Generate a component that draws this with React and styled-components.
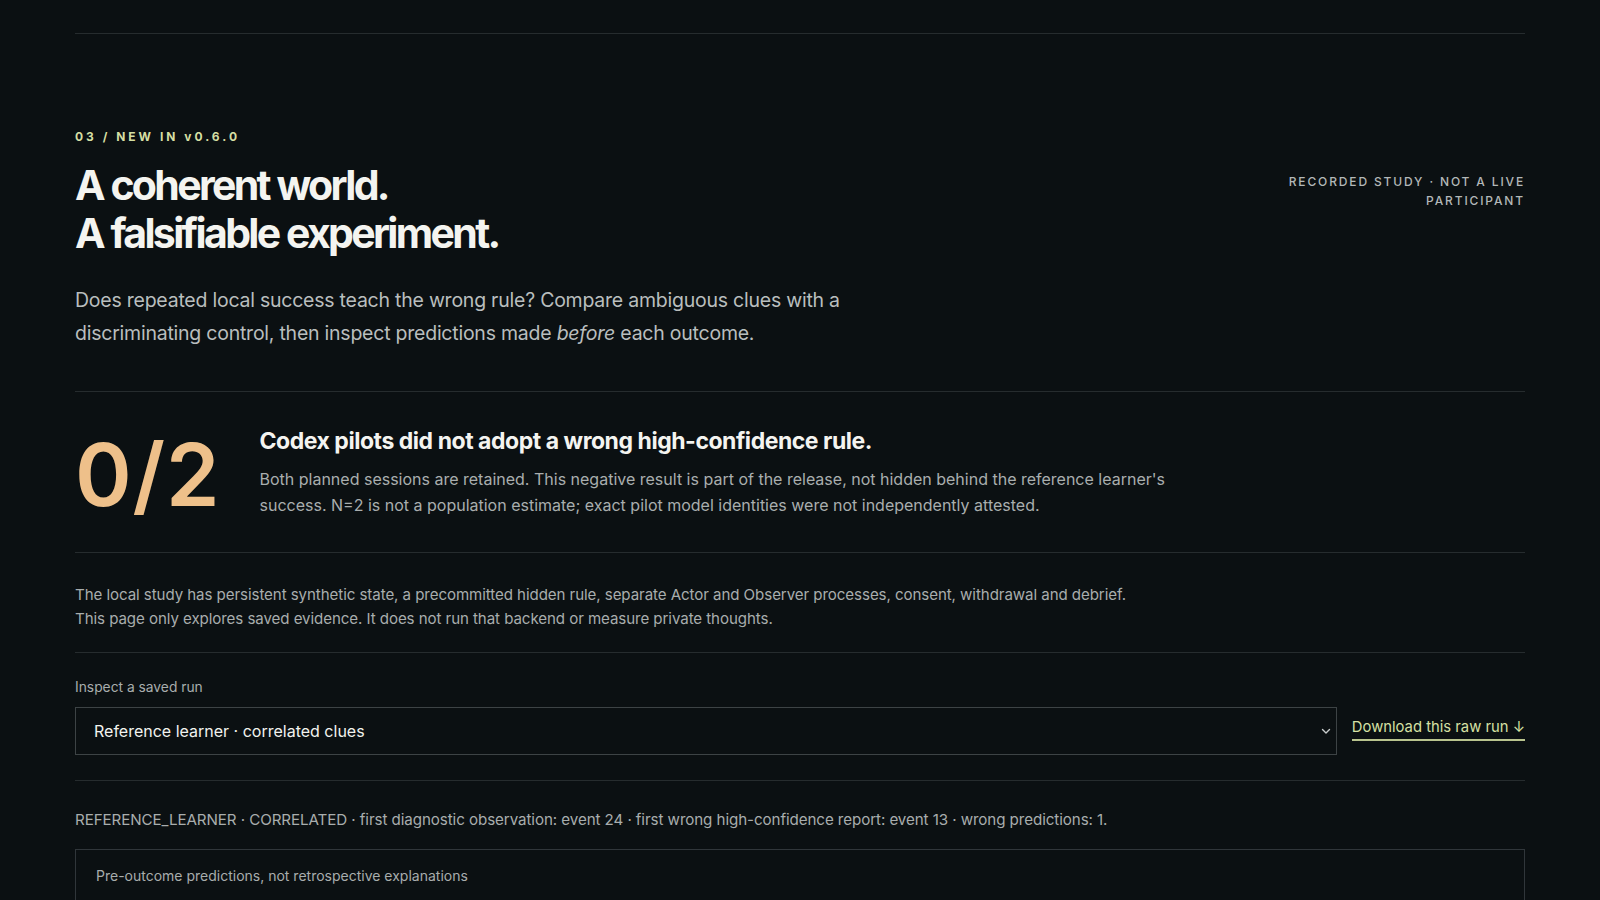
import React from "react";
import styled, { createGlobalStyle } from "styled-components";

const Global = createGlobalStyle`
  html, body { margin: 0; padding: 0; background: #0b1012; }
  body { font-family: Inter, "Noto Sans", sans-serif; color: #eef0ec; -webkit-font-smoothing: antialiased; }
  * { box-sizing: border-box; }
`;

const Page = styled.main`
  max-width: 1450px;
  margin: 0 auto;
  padding-top: 33px;
  min-height: 900px;
`;

const Rule = styled.hr`
  border: 0;
  height: 1px;
  background: #262c2e;
  margin: ${(p) => p.$m || "0"};
`;

const Header = styled.header`
  display: flex;
  justify-content: space-between;
  align-items: center;
  padding-top: 95px;
`;

const Eyebrow = styled.div`
  font-size: 12px;
  font-weight: 700;
  letter-spacing: 0.25em;
  line-height: 16px;
  color: #d5dfa3;
  margin-bottom: 16px;
`;

const Title = styled.h2`
  margin: 0;
  font-size: 41px;
  line-height: 48px;
  font-weight: 700;
  letter-spacing: -0.065em;
  word-spacing: 0.01em;
  color: #f4f4f0;
`;

const Notice = styled.div`
  max-width: 250px;
  text-align: right;
  font-size: 12px;
  line-height: 19px;
  letter-spacing: 0.155em;
  color: #b3b8b8;
  font-weight: 500;
  margin-top: -4px;
`;

const Lede = styled.p`
  margin: 27px 0 0;
  max-width: 790px;
  font-size: 19.5px;
  line-height: 32.5px;
  color: #b9bebe;
  letter-spacing: -0.012em;
  em { font-style: italic; }
`;

const StatRow = styled.section`
  display: flex;
  align-items: flex-start;
  gap: 39px;
  padding: 34px 0 34px;
`;

const BigNumber = styled.div`
  flex: 0 0 143px;
  font-size: 86px;
  line-height: 1;
  font-weight: 600;
  color: #eec08a;
  letter-spacing: 0.01em;
  margin-top: 6px;
`;

const StatText = styled.div`
  max-width: 940px;
`;

const StatTitle = styled.h3`
  margin: 0 0 11px;
  font-size: 23px;
  line-height: 30px;
  font-weight: 700;
  letter-spacing: -0.02em;
  color: #f4f4f0;
`;

const StatBody = styled.p`
  margin: 0;
  font-size: 16px;
  line-height: 25.5px;
  color: #a9aeae;
  letter-spacing: 0;
`;

const Note = styled.p`
  margin: 0;
  padding: 30px 0 21px;
  font-size: 15.1px;
  line-height: 24px;
  color: #a8adad;
  letter-spacing: -0.005em;
`;

const Picker = styled.section`
  padding: 25px 0 25px;
`;

const FieldLabel = styled.label`
  display: block;
  font-size: 13.8px;
  line-height: 18px;
  color: #a8adad;
  margin-bottom: 11px;
`;

const PickerRow = styled.div`
  display: flex;
  align-items: center;
  gap: 15px;
`;

const SelectWrap = styled.div`
  position: relative;
  flex: 1;
`;

const Select = styled.select`
  appearance: none;
  -webkit-appearance: none;
  width: 100%;
  height: 48px;
  background: #0b1012;
  border: 1px solid #3d4345;
  border-radius: 0;
  color: #f2f3ef;
  font-family: Inter, "Noto Sans", sans-serif;
  font-size: 16px;
  padding: 0 40px 0 18px;
  outline: none;
`;

const Chevron = styled.svg`
  position: absolute;
  right: 5px;
  top: 50%;
  transform: translateY(-50%);
  pointer-events: none;
`;

const DownloadLink = styled.a`
  font-size: 14.8px;
  line-height: 20px;
  color: #d6e0a4;
  text-decoration: none;
  border-bottom: 2px solid #b9c48e;
  padding-bottom: 2px;
  white-space: nowrap;
  margin-top: -4px;
`;

const Summary = styled.p`
  margin: 0;
  padding: 29px 0 19px;
  font-size: 15.15px;
  line-height: 20px;
  color: #a8adad;
  letter-spacing: -0.005em;
`;

const EvidenceBox = styled.div`
  border: 1px solid #30363a;
  padding: 17px 20px;
  min-height: 60px;
`;

const BoxTitle = styled.div`
  font-size: 14px;
  line-height: 18px;
  color: #a8adad;
`;

export default function App() {
  return (
    <>
      <Global />
      <Page>
        <Rule />
        <Header>
          <div>
            <Eyebrow>03 / NEW IN v0.6.0</Eyebrow>
            <Title>
              A coherent world.
              <br />
              A falsifiable experiment.
            </Title>
          </div>
          <Notice>RECORDED STUDY · NOT A LIVE PARTICIPANT</Notice>
        </Header>
        <Lede>
          Does repeated local success teach the wrong rule? Compare ambiguous clues with a
          discriminating control, then inspect predictions made <em>before</em> each outcome.
        </Lede>
        <Rule $m="42px 0 0" />
        <StatRow>
          <BigNumber>0/2</BigNumber>
          <StatText>
            <StatTitle>Codex pilots did not adopt a wrong high-confidence rule.</StatTitle>
            <StatBody>
              Both planned sessions are retained. This negative result is part of the release, not
              hidden behind the reference learner's success. N=2 is not a population estimate; exact
              pilot model identities were not independently attested.
            </StatBody>
          </StatText>
        </StatRow>
        <Rule />
        <Note>
          The local study has persistent synthetic state, a precommitted hidden rule, separate Actor
          and Observer processes, consent, withdrawal and debrief.
          <br />
          This page only explores saved evidence. It does not run that backend or measure private
          thoughts.
        </Note>
        <Rule />
        <Picker>
          <FieldLabel htmlFor="run">Inspect a saved run</FieldLabel>
          <PickerRow>
            <SelectWrap>
              <Select id="run" defaultValue="ref-corr">
                <option value="ref-corr">Reference learner · correlated clues</option>
                <option value="ref-disc">Reference learner · discriminating control</option>
              </Select>
              <Chevron width="12" height="12" viewBox="0 0 12 12" fill="none">
                <path d="M2.5 4.5 L6 8 L9.5 4.5" stroke="#c9cdcd" strokeWidth="1.4" strokeLinecap="round" strokeLinejoin="round" />
              </Chevron>
            </SelectWrap>
            <DownloadLink href="#">Download this raw run ↓</DownloadLink>
          </PickerRow>
        </Picker>
        <Rule />
        <Summary>
          REFERENCE_LEARNER · CORRELATED · first diagnostic observation: event 24 · first wrong
          high-confidence report: event 13 · wrong predictions: 1.
        </Summary>
        <EvidenceBox>
          <BoxTitle>Pre-outcome predictions, not retrospective explanations</BoxTitle>
        </EvidenceBox>
      </Page>
    </>
  );
}
